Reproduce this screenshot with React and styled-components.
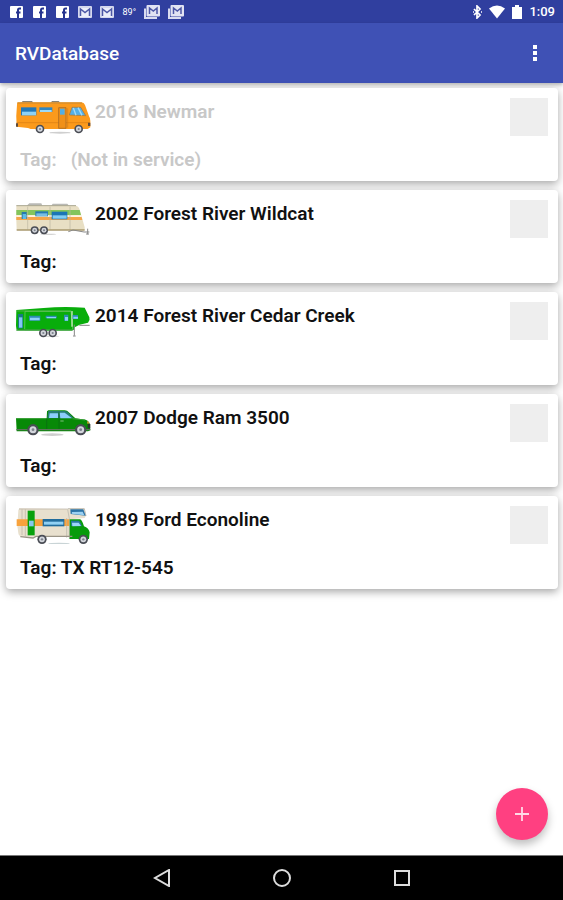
import React, { useState } from 'react';
import styled, { createGlobalStyle } from 'styled-components';

const vehicles = [
  { id: 1, name: '2016 Newmar', tag: '  (Not in service)', type: 'motorhome', inService: false },
  { id: 2, name: '2002 Forest River Wildcat', tag: '', type: 'trailer', inService: true },
  { id: 3, name: '2014 Forest River Cedar Creek', tag: '', type: 'fifthWheel', inService: true },
  { id: 4, name: '2007 Dodge Ram 3500', tag: '', type: 'pickup', inService: true },
  { id: 5, name: '1989 Ford Econoline', tag: 'TX RT12-545', type: 'camper', inService: true },
];

const Wheel = ({ x, y, r = 13 }) => (
  <g>
    <circle cx={x} cy={y} r={r} fill="#4a4d55" />
    <circle cx={x} cy={y} r={r * 0.62} fill="#d3d6dc" />
    <circle cx={x} cy={y} r={r * 0.25} fill="#7d828c" />
  </g>
);

const Motorhome = () => (
  <g>
    <ellipse cx="180" cy="140" rx="32" ry="3" fill="#cfcfcf" />
    <path d="M64 50l4-5h28l4 5zM152 50l4-5h20l5 5z" fill="#8b8374" />
    <path d="M54 49H244q8 0 11 8l12 34q4 5 4 14v19l-8 5H92l-8-3-34-4q-3-30 1-66 0-7 3-7z" fill="#fb9a1c" />
    <path d="M52 51H246" stroke="#c88a35" strokeWidth="3" />
    <path d="M50 110H270" stroke="#d87c12" strokeWidth="2" />
    <path d="M48 112h6v10h-6zM264 110h7v10h-7z" fill="#5d4a3c" />
    <path d="M63 64h46v24H63z" fill="#2178b8" />
    <path d="M66 77h42v11H66z" fill="#8ed2f5" />
    <path d="M118 64h39v14h-39z" fill="#3187c2" />
    <path d="M120 72h35v6h-35z" fill="#9cdaf7" />
    <path d="M176 65h22v62h-22z" fill="#f09018" stroke="#9c6225" strokeWidth="2" />
    <path d="M180 68h14v18h-14z" fill="#51aee4" />
    <path d="M208 87l8-23h26l15 25z" fill="#55b0e8" stroke="#a57232" strokeWidth="2" />
    <path d="M220 66l8 22M234 65l12 23" stroke="#a5dbf5" strokeWidth="4" />
    <path d="M203 67v58" stroke="#d87c12" strokeWidth="2" />
    <Wheel x={120} y={129} />
    <Wheel x={236} y={129} />
  </g>
);

const Trailer = () => (
  <g>
    <ellipse cx="145" cy="139" rx="24" ry="2" fill="#d4d4d4" />
    <path d="M80 53l8-7h36l3 7zM154 53l4-6h44l5 6z" fill="#b9b9b5" />
    <path d="M49 53H228q8 1 11 12l15 53v8H50q-2-35-1-73z" fill="#e8dfc4" />
    <path d="M49 53H228" stroke="#a9a58f" strokeWidth="3" />
    <path d="M49 66H239l4 15H49z" fill="#83c55c" />
    <path d="M49 87H245l2 9H49z" fill="#f5a64a" />
    <path d="M49 82H243l2 5H49z" fill="#fff4dd" />
    <path d="M65 72h15v21H65z" fill="#2878ad" />
    <path d="M68 78h10v15H68z" fill="#5bbbe8" />
    <path d="M106 70h38v15h-38z" fill="#277ab2" />
    <path d="M109 76h33v8h-33z" fill="#78bfe3" />
    <path d="M155 71h47v23h-47z" fill="#1b75b5" />
    <path d="M158 82h42v10h-42z" fill="#83cdf3" />
    <path d="M83 56v69M150 56v69M210 56v69" stroke="#bcb7a2" strokeWidth="2" />
    <path d="M50 126H254" stroke="#a9996e" strokeWidth="4" />
    <path d="M205 131l14-5 33 6h16M263 122v17M258 138h9" stroke="#898989" strokeWidth="3" fill="none" />
    <Wheel x={104} y={127} r={12} />
    <Wheel x={132} y={127} r={12} />
  </g>
);

const FifthWheel = () => (
  <g>
    <ellipse cx="150" cy="139" rx="28" ry="2" fill="#d4d4d4" />
    <path d="M49 60l82-6q60-6 123-1l14 29q3 8-4 16l-25 6-15 8-3 8H54q-7-3-6-12z" fill="#08ad0b" />
    <path d="M75 64l138 0 5 46 0 9H74z" fill="none" stroke="#55c550" strokeWidth="3" />
    <path d="M216 63v47" stroke="#c9e8bd" strokeWidth="4" />
    <path d="M49 63h165" stroke="#70b967" strokeWidth="2" />
    <path d="M54 72h15v43H54z" fill="#187b82" />
    <path d="M57 82h10v31H57z" fill="#82c5f5" />
    <path d="M87 77h34v15H87zM137 77h33v8h-33zM192 74h13v18h-13zM218 75h16v12h-16z" fill="#2c8db2" />
    <path d="M90 83h29v8H90zM140 81h28v4h-28zM195 81h9v11h-9zM220 80h14v6h-14z" fill="#8bd0fa" />
    <path d="M223 104v33M219 138h8M238 106h31" stroke="#858585" strokeWidth="3" />
    <path d="M49 120H218" stroke="#289b2a" strokeWidth="4" />
    <Wheel x={130} y={129} />
    <Wheel x={158} y={129} />
  </g>
);

const Pickup = () => (
  <g>
    <ellipse cx="157" cy="128" rx="34" ry="4" fill="#cecece" />
    <path d="M48 79h92l1-21 4-3h49q7 0 14 7l18 17 31 4q8 2 12 11l2 21-7 3H50z" fill="#078907" />
    <path d="M49 80h92M217 80l38 4" stroke="#3ca039" strokeWidth="3" />
    <path d="M142 79l3-22h49q7 0 12 6l14 15z" fill="#267d75" />
    <path d="M149 64h25v14h-27zM179 62h15l22 17h-35z" fill="#8ccdfa" />
    <path d="M177 59v54M140 79v34" stroke="#0a6713" strokeWidth="2" />
    <path d="M181 87h10" stroke="#bed9bd" strokeWidth="2" />
    <path d="M49 113h222" stroke="#5d725a" strokeWidth="4" />
    <path d="M262 86l7 8-7 1z" fill="#ef9637" />
    <path d="M263 96h8v13h-8z" fill="#27352b" />
    <Wheel x={99} y={113} r={17} />
    <Wheel x={242} y={113} r={17} />
  </g>
);

const Camper = () => (
  <g>
    <ellipse cx="177" cy="149" rx="32" ry="3" fill="#c9d4d6" />
    <path d="M58 43l147 2 48-1 5 21-4 7-44 4v52H63q-8-2-8-10l-3-22 3-47z" fill="#e8e0ce" />
    <path d="M203 44h50l5 22" stroke="#c3beb2" strokeWidth="3" fill="none" />
    <path d="M57 45h145M66 46v77M76 46v81" stroke="#b8b1a3" strokeWidth="2" />
    <path d="M50 76h158v20H50z" fill="#f8a23c" />
    <path d="M83 50h21v74H83z" fill="#08a10d" />
    <path d="M87 80h14v17H87z" fill="#8ac8ed" />
    <path d="M128 75h65v22h-65z" fill="#216c9c" />
    <path d="M132 83h58v9h-58z" fill="#91d1f4" />
    <path d="M211 46h39l7 19-45-5z" fill="#2b73a6" />
    <path d="M216 54l32-1 5 11-38-5z" fill="#9bd1f2" />
    <path d="M208 76h32q6 1 12 21 14 5 17 18l-2 20h-59z" fill="#079b0b" />
    <path d="M213 80h23q6 3 9 17l-31-1z" fill="#2977a2" />
    <path d="M216 86h20l7 10-26 1z" fill="#9ad5f6" />
    <path d="M203 46l5 28v60M200 72v59" stroke="#b4b2a8" strokeWidth="2" fill="none" />
    <path d="M61 128l38 4 9-5h109" stroke="#9a9486" strokeWidth="4" fill="none" />
    <Wheel x={126} y={136} r={14} />
    <Wheel x={250} y={136} r={14} />
  </g>
);

const drawings = {
  motorhome: Motorhome,
  trailer: Trailer,
  fifthWheel: FifthWheel,
  pickup: Pickup,
  camper: Camper,
};

const FacebookIcon = () => (
  <svg width="15" height="14" viewBox="0 0 15 14">
    <rect x="1" y="1" width="13" height="12" rx="1" fill="#fff" />
    <path d="M12 3.5h-1.5q-1.5 0-1.5 1.5V13M7 7.5h4.5" stroke="#26348f" strokeWidth="2" fill="none" />
  </svg>
);

const MailIcon = () => (
  <svg width="14" height="14" viewBox="0 0 14 14">
    <rect y="1" width="14" height="12" rx="1" fill="#d5d8ee" />
    <rect x="2" y="3" width="10" height="9" fill="#eceefa" />
    <path d="M2.500 11V4L7 7.500 11.500 4v7" stroke="#4d57a6" strokeWidth="1.500" fill="none" />
  </svg>
);

const MailStackIcon = () => (
  <svg width="16" height="14" viewBox="0 0 16 14">
    <path d="M1 3.500V13h12" stroke="#d9dcf0" strokeWidth="2" fill="none" />
    <rect x="2.500" y="0" width="13.500" height="11.500" rx="1" fill="#e1e3f3" />
    <path d="M5.500 9V3l3.800 3L13 3v6" stroke="#4d57a6" strokeWidth="1.500" fill="none" />
  </svg>
);

const App = () => {
  const [items] = useState(vehicles);

  return (
    <>
      <GlobalStyle />
      <Screen>
        <StatusBar>
          <StatusGroup $gap={8}>
            <FacebookIcon />
            <FacebookIcon />
            <FacebookIcon />
            <MailIcon />
            <MailIcon />
            <Temperature>89°</Temperature>
            <MailStackIcon />
            <MailStackIcon />
          </StatusGroup>
          <StatusGroup $gap={7}>
            <svg width="9" height="14" viewBox="0 0 9 14">
              <path d="M1 4l6 6-3 3V1l3 3-6 6M0 7h1M8 7h1" stroke="#fff" strokeWidth="1.700" fill="none" />
            </svg>
            <svg width="16" height="14" viewBox="0 0 16 14">
              <path d="M0 3.500Q8-2.500 16 3.500L8 13.500z" fill="#fff" />
            </svg>
            <svg width="10" height="14" viewBox="0 0 10 14">
              <path d="M3 0h4v2h3v12H0V2h3z" fill="#fff" />
            </svg>
            <Clock>1:09</Clock>
          </StatusGroup>
        </StatusBar>

        <AppBar>
          <Title>RVDatabase</Title>
          <MenuButton type="button" aria-label="More options">
            <svg width="4" height="16" viewBox="0 0 4 16">
              <path d="M0 0h4v4H0zM0 6h4v4H0zM0 12h4v4H0z" fill="#fff" />
            </svg>
          </MenuButton>
        </AppBar>

        <Content>
          <VehicleList>
            {items.map((item) => {
              const Drawing = drawings[item.type];
              return (
                <VehicleCard key={item.id} $inService={item.inService}>
                  <CardTop>
                    <VehicleImage viewBox="45 36 228 114" aria-hidden="true">
                      <Drawing />
                    </VehicleImage>
                    <VehicleName>{item.name}</VehicleName>
                    <PhotoButton type="button" aria-label={`Photo of ${item.name}`} />
                  </CardTop>
                  <VehicleTag>Tag: {item.tag}</VehicleTag>
                </VehicleCard>
              );
            })}
          </VehicleList>
          <AddButton type="button" aria-label="Add vehicle">
            <svg width="14" height="14" viewBox="0 0 14 14">
              <path d="M7 0v14M0 7h14" stroke="#ffd9e6" strokeWidth="1.800" />
            </svg>
          </AddButton>
        </Content>

        <NavBar>
          <NavButton type="button" aria-label="Back">
            <svg width="18" height="18" viewBox="0 0 18 18">
              <path d="M16 1v16L2 9z" />
            </svg>
          </NavButton>
          <NavButton type="button" aria-label="Home">
            <svg width="18" height="18" viewBox="0 0 18 18">
              <circle cx="9" cy="9" r="8" />
            </svg>
          </NavButton>
          <NavButton type="button" aria-label="Recent apps">
            <svg width="18" height="18" viewBox="0 0 18 18">
              <rect x="2" y="2" width="14" height="14" />
            </svg>
          </NavButton>
        </NavBar>
      </Screen>
    </>
  );
};

export default App;

const GlobalStyle = createGlobalStyle`
  * {
    box-sizing: border-box;
  }
  body {
    margin: 0;
    background-color: white;
    font-family: Roboto, sans-serif;
  }
  button {
    padding: 0;
    border: none;
    cursor: pointer;
  }
  svg {
    display: block;
    flex-shrink: 0;
  }
`

const Screen = styled.div`
  display: flex;
  flex-direction: column;
  min-height: 100vh;
`

const StatusBar = styled.div`
  display: flex;
  justify-content: space-between;
  align-items: center;
  height: 23px;
  padding: 0 8px 0 9px;
  background-color: #303f9f;
  color: white;
`

const StatusGroup = styled.div`
  display: flex;
  align-items: center;
  gap: ${(props) => props.$gap}px;
`

const Temperature = styled.span`
  width: 14px;
  font-size: 9px;
  text-align: right;
`

const Clock = styled.span`
  font-size: 13px;
  font-weight: 500;
`

const AppBar = styled.header`
  position: relative;
  display: flex;
  justify-content: space-between;
  align-items: center;
  height: 60px;
  padding: 0 16px 0 15px;
  background-color: #3f51b5;
  color: white;
  box-shadow: 0 2px 4px rgba(0, 0, 0, 0.3);
`

const Title = styled.h1`
  margin: 0;
  font-size: 19px;
  font-weight: 500;
`

const MenuButton = styled.button`
  display: flex;
  justify-content: center;
  align-items: center;
  width: 24px;
  height: 40px;
  background-color: transparent;
`

const Content = styled.main`
  position: relative;
  flex: 1;
`

const VehicleList = styled.ul`
  display: flex;
  flex-direction: column;
  gap: 9px;
  margin: 0;
  padding: 5px 5px 96px 6px;
  list-style: none;
`

const VehicleCard = styled.li`
  padding: 10px 10px 9px 9px;
  border-radius: 4px;
  background-color: white;
  color: ${(props) => (props.$inService ? '#111' : '#c8c8c8')};
  font-size: 19px;
  font-weight: 600;
  line-height: 24px;
  box-shadow: 0 3px 8px rgba(0, 0, 0, 0.35);
`

const CardTop = styled.div`
  display: flex;
  align-items: flex-start;
  gap: 4px;
`

const VehicleImage = styled.svg`
  width: 76px;
  height: 38px;
`

const VehicleName = styled.span`
  flex: 1;
  padding-top: 2px;
`

const PhotoButton = styled.button`
  width: 38px;
  height: 38px;
  background-color: #eee;
`

const VehicleTag = styled.div`
  padding: 12px 5px 0;
  white-space: pre;
`

const AddButton = styled.button`
  position: absolute;
  right: 15px;
  bottom: 15px;
  display: flex;
  justify-content: center;
  align-items: center;
  width: 52px;
  height: 52px;
  border-radius: 50%;
  background-color: #ff4081;
  box-shadow: 0 5px 8px rgba(0, 0, 0, 0.25);
`

const NavBar = styled.nav`
  display: flex;
  justify-content: center;
  align-items: center;
  gap: 80px;
  height: 45px;
  border-top: 1px solid #777;
  background-color: black;
`

const NavButton = styled.button`
  display: flex;
  justify-content: center;
  align-items: center;
  width: 40px;
  height: 40px;
  background-color: transparent;

  svg {
    fill: none;
    stroke: #ddd;
    stroke-width: 2;
  }
`
